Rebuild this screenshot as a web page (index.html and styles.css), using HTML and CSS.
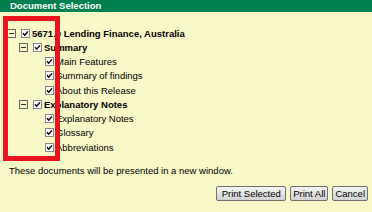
FILE: index.html
```html
<!DOCTYPE html>
<html lang="en">
<head>
  <meta charset="UTF-8">
  <title>Document Selection</title>
  <link rel="stylesheet" href="styles.css">
</head>
<body>
  <div class="title-bar">Document Selection</div>

  <div class="tree-area">
    <!-- 選択ツリー -->
    <div class="tree">
      <div class="row level-0 bold">
        <svg class="expander" width="9" height="9" viewBox="0 0 9 9"><rect x="0.5" y="0.5" width="8" height="8" fill="none" stroke="#666"/><line x1="2" y1="4.5" x2="7" y2="4.5" stroke="#333"/></svg>
        <svg class="check" width="9" height="9" viewBox="0 0 9 9"><rect x="0.5" y="0.5" width="8" height="8" fill="#fff" stroke="#8a8a8a"/><path d="M2 4.3 L3.7 6.2 L7 2.4" fill="none" stroke="#000" stroke-width="1.4"/></svg>
        <span>5671.0 Lending Finance, Australia</span>
      </div>
      <div class="row level-1 bold">
        <svg class="expander" width="9" height="9" viewBox="0 0 9 9"><rect x="0.5" y="0.5" width="8" height="8" fill="none" stroke="#666"/><line x1="2" y1="4.5" x2="7" y2="4.5" stroke="#333"/></svg>
        <svg class="check" width="9" height="9" viewBox="0 0 9 9"><rect x="0.5" y="0.5" width="8" height="8" fill="#fff" stroke="#8a8a8a"/><path d="M2 4.3 L3.7 6.2 L7 2.4" fill="none" stroke="#000" stroke-width="1.4"/></svg>
        <span>Summary</span>
      </div>
      <div class="row level-2">
        <span class="spacer"></span>
        <svg class="check" width="9" height="9" viewBox="0 0 9 9"><rect x="0.5" y="0.5" width="8" height="8" fill="#fff" stroke="#8a8a8a"/><path d="M2 4.3 L3.7 6.2 L7 2.4" fill="none" stroke="#000" stroke-width="1.4"/></svg>
        <span>Main Features</span>
      </div>
      <div class="row level-2">
        <span class="spacer"></span>
        <svg class="check" width="9" height="9" viewBox="0 0 9 9"><rect x="0.5" y="0.5" width="8" height="8" fill="#fff" stroke="#8a8a8a"/><path d="M2 4.3 L3.7 6.2 L7 2.4" fill="none" stroke="#000" stroke-width="1.4"/></svg>
        <span>Summary of findings</span>
      </div>
      <div class="row level-2">
        <span class="spacer"></span>
        <svg class="check" width="9" height="9" viewBox="0 0 9 9"><rect x="0.5" y="0.5" width="8" height="8" fill="#fff" stroke="#8a8a8a"/><path d="M2 4.3 L3.7 6.2 L7 2.4" fill="none" stroke="#000" stroke-width="1.4"/></svg>
        <span>About this Release</span>
      </div>
      <div class="row level-1 bold">
        <svg class="expander" width="9" height="9" viewBox="0 0 9 9"><rect x="0.5" y="0.5" width="8" height="8" fill="none" stroke="#666"/><line x1="2" y1="4.5" x2="7" y2="4.5" stroke="#333"/></svg>
        <svg class="check" width="9" height="9" viewBox="0 0 9 9"><rect x="0.5" y="0.5" width="8" height="8" fill="#fff" stroke="#8a8a8a"/><path d="M2 4.3 L3.7 6.2 L7 2.4" fill="none" stroke="#000" stroke-width="1.4"/></svg>
        <span>Explanatory Notes</span>
      </div>
      <div class="row level-2">
        <span class="spacer"></span>
        <svg class="check" width="9" height="9" viewBox="0 0 9 9"><rect x="0.5" y="0.5" width="8" height="8" fill="#fff" stroke="#8a8a8a"/><path d="M2 4.3 L3.7 6.2 L7 2.4" fill="none" stroke="#000" stroke-width="1.4"/></svg>
        <span>Explanatory Notes</span>
      </div>
      <div class="row level-2">
        <span class="spacer"></span>
        <svg class="check" width="9" height="9" viewBox="0 0 9 9"><rect x="0.5" y="0.5" width="8" height="8" fill="#fff" stroke="#8a8a8a"/><path d="M2 4.3 L3.7 6.2 L7 2.4" fill="none" stroke="#000" stroke-width="1.4"/></svg>
        <span>Glossary</span>
      </div>
      <div class="row level-2">
        <span class="spacer"></span>
        <svg class="check" width="9" height="9" viewBox="0 0 9 9"><rect x="0.5" y="0.5" width="8" height="8" fill="#fff" stroke="#8a8a8a"/><path d="M2 4.3 L3.7 6.2 L7 2.4" fill="none" stroke="#000" stroke-width="1.4"/></svg>
        <span>Abbreviations</span>
      </div>
    </div>

    <!-- 赤枠（注記） -->
    <div class="highlight"></div>
  </div>

  <p class="note">These documents will be presented in a new window.</p>

  <div class="buttons">
    <button class="btn btn-wide">Print Selected</button>
    <button class="btn">Print All</button>
    <button class="btn">Cancel</button>
  </div>
</body>
</html>
```

FILE: styles.css
```css
body {
  margin: 0;
  background-color: #f9f8c9;
  font-family: "Liberation Sans", Arial, sans-serif;
  font-size: 9.5px;
  color: #000;
}

.title-bar {
  height: 12px;
  line-height: 12px;
  padding-left: 10px;
  background-color: #00804f;
  color: #fff;
  font-weight: bold;
}

.tree-area {
  position: relative;
  padding-top: 14px;
}

.tree {
  display: flex;
  flex-direction: column;
}

.row {
  display: flex;
  align-items: center;
  height: 14.25px;
  white-space: nowrap;
}

.row.bold {
  font-weight: bold;
}

.level-0 {
  padding-left: 7px;
}

.level-1 {
  padding-left: 19px;
}

.level-2 {
  padding-left: 31px;
}

.expander,
.spacer {
  width: 9px;
  height: 9px;
  margin-right: 5px;
  flex-shrink: 0;
}

.check {
  margin-right: 2px;
  flex-shrink: 0;
}

.highlight {
  position: absolute;
  left: 3px;
  top: 4px;
  width: 47px;
  height: 135px;
  border: 5px solid #e8141e;
}

.note {
  margin: 10px 0 0;
  padding-left: 9px;
  line-height: 14px;
}

.buttons {
  display: flex;
  justify-content: flex-end;
  gap: 4px;
  padding-right: 4px;
  margin-top: 8px;
}

.btn {
  height: 15px;
  padding: 0 2px;
  font-family: "Liberation Sans", Arial, sans-serif;
  font-size: 9.5px;
  color: #000;
  border: 1px solid #707070;
  border-radius: 2px;
  background: linear-gradient(#f4f4f4, #e4e4e4 50%, #d2d2d2);
}

.btn-wide {
  width: 70px;
}
```
